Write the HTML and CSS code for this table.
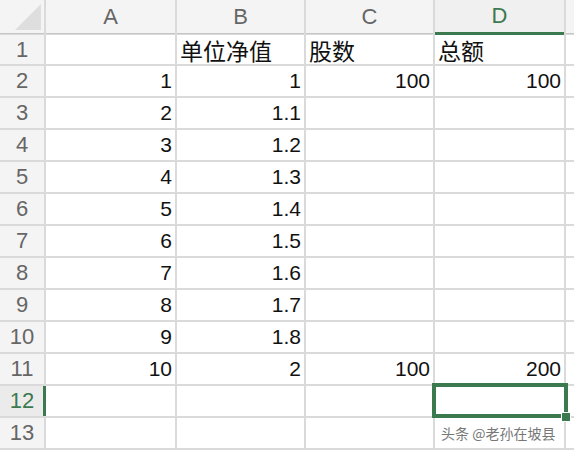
FILE: index.html
```html
<!DOCTYPE html>
<html>
<head>
<meta charset="utf-8">
<link rel="stylesheet" href="styles.css">
</head>
<body>
<div class="sheet">
  <div class="corner"></div>
  <div class="ch">A</div>
  <div class="ch">B</div>
  <div class="ch">C</div>
  <div class="ch active-col">D</div>
  <div class="ch"></div>

  <div class="rh">1</div><div class="c"></div><div class="c l cjk">单位净值</div><div class="c l cjk">股数</div><div class="c l cjk">总额</div><div class="c"></div>
  <div class="rh">2</div><div class="c">1</div><div class="c">1</div><div class="c">100</div><div class="c">100</div><div class="c"></div>
  <div class="rh">3</div><div class="c">2</div><div class="c">1.1</div><div class="c"></div><div class="c"></div><div class="c"></div>
  <div class="rh">4</div><div class="c">3</div><div class="c">1.2</div><div class="c"></div><div class="c"></div><div class="c"></div>
  <div class="rh">5</div><div class="c">4</div><div class="c">1.3</div><div class="c"></div><div class="c"></div><div class="c"></div>
  <div class="rh">6</div><div class="c">5</div><div class="c">1.4</div><div class="c"></div><div class="c"></div><div class="c"></div>
  <div class="rh">7</div><div class="c">6</div><div class="c">1.5</div><div class="c"></div><div class="c"></div><div class="c"></div>
  <div class="rh">8</div><div class="c">7</div><div class="c">1.6</div><div class="c"></div><div class="c"></div><div class="c"></div>
  <div class="rh">9</div><div class="c">8</div><div class="c">1.7</div><div class="c"></div><div class="c"></div><div class="c"></div>
  <div class="rh">10</div><div class="c">9</div><div class="c">1.8</div><div class="c"></div><div class="c"></div><div class="c"></div>
  <div class="rh">11</div><div class="c">10</div><div class="c">2</div><div class="c">100</div><div class="c">200</div><div class="c"></div>
  <div class="rh active-row">12</div><div class="c"></div><div class="c"></div><div class="c"></div><div class="c selected"><span class="handle"></span></div><div class="c"></div>
  <div class="rh">13</div><div class="c"></div><div class="c"></div><div class="c"></div><div class="c"><span class="watermark">头条 @老孙在坡县</span></div><div class="c"></div>
</div>
</body>
</html>
```
FILE: styles.css
```css
html, body {
  margin: 0;
  padding: 0;
  background: #ffffff;
  overflow: hidden;
}

.sheet {
  display: grid;
  grid-template-columns: 44px 129px 127px 127px 129px 20px;
  grid-template-rows: 33px 29px repeat(12, 30px);
  gap: 2px;
  background: #dadada;
  width: 574px;
  height: 450px;
  overflow: hidden;
  font-family: "Liberation Sans", Arial, "Noto Sans CJK SC", sans-serif;
  color: #111;
}

.corner {
  background: #f4f4f4;
  position: relative;
  border-bottom: 1px solid #c6c6c6;
  margin-bottom: -1px;
}

.corner::after {
  content: "";
  position: absolute;
  right: 3px;
  bottom: 3px;
  width: 0;
  height: 0;
  border-left: 26px solid transparent;
  border-bottom: 26px solid #dedede;
}

.ch {
  background: #f4f4f4;
  color: #666;
  font-size: 22px;
  display: flex;
  align-items: center;
  justify-content: center;
  border-bottom: 1px solid #c6c6c6;
  margin-bottom: -1px;
}

.ch.active-col {
  color: #3b7a4f;
  border-bottom: 3px solid #3b7a4f;
  margin-bottom: -2px;
  background: #f0f0f0;
}

.rh {
  background: #f4f4f4;
  color: #666;
  font-size: 22px;
  display: flex;
  align-items: center;
  justify-content: center;
}

.rh.active-row {
  color: #3b7a4f;
  background: #ebebeb;
  box-shadow: inset -3px 0 0 #3b7a4f;
  margin-right: -2px;
  padding-right: 2px;
}

.c {
  background: #ffffff;
  font-size: 21px;
  display: flex;
  align-items: center;
  justify-content: flex-end;
  padding: 0 3px;
  position: relative;
}

.c.l {
  justify-content: flex-start;
}

.cjk {
  font-size: 23px;
  font-family: "Noto Sans CJK SC", sans-serif;
}

.selected::after {
  content: "";
  position: absolute;
  left: -3px;
  top: -3px;
  right: -4px;
  bottom: -2px;
  border: 4px solid #3b7a4f;
  z-index: 2;
}

.handle {
  position: absolute;
  right: -7px;
  bottom: -6px;
  width: 8px;
  height: 8px;
  background: #3b7a4f;
  border: 1px solid #ffffff;
  z-index: 3;
}

.watermark {
  position: absolute;
  left: 6px;
  top: 5px;
  font-family: "Noto Sans CJK SC", sans-serif;
  font-size: 14px;
  color: #777;
  white-space: nowrap;
  text-shadow: 0 0 1px #fff;
  z-index: 4;
}
```
